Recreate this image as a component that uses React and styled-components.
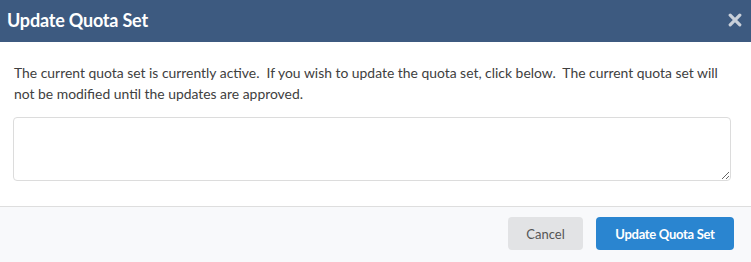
import React from "react";
import styled, { createGlobalStyle } from "styled-components";

const GlobalStyle = createGlobalStyle`
  html, body {
    margin: 0;
    padding: 0;
    background: #ffffff;
  }
  body {
    font-family: Lato, "Open Sans", sans-serif;
  }
  * {
    box-sizing: border-box;
  }
`;

const Modal = styled.div`
  width: 751px;
  height: 262px;
  display: flex;
  flex-direction: column;
  background: #ffffff;
`;

const Header = styled.div`
  height: 42px;
  background: #3d5a80;
  display: flex;
  align-items: center;
  justify-content: space-between;
  padding: 0 9px 2px 7px;
`;

const Title = styled.h1`
  margin: 0;
  font-size: 18px;
  font-weight: 700;
  color: #ffffff;
  letter-spacing: -0.2px;
`;

const CloseButton = styled.button`
  border: 0;
  background: none;
  padding: 0;
  display: flex;
  cursor: pointer;
`;

const Body = styled.div`
  flex: 1;
  padding: 20px 20px 25px 13px;
`;

const Message = styled.p`
  margin: 0 0 13px 1px;
  font-size: 13.9px;
  line-height: 21px;
  color: #404040;
  white-space: pre-wrap;
`;

const Notes = styled.textarea`
  display: block;
  width: 718px;
  height: 64px;
  border: 1px solid #dcdcdc;
  border-radius: 4px;
  font-family: inherit;
  font-size: 13px;
  padding: 6px 8px;
  outline: none;
`;

const Footer = styled.div`
  height: 56px;
  border-top: 1px solid #dedede;
  background: #f8f9fb;
  display: flex;
  align-items: center;
  justify-content: flex-end;
  gap: 13px;
  padding: 0 17px 2px;
`;

const Button = styled.button`
  height: 33px;
  width: ${(p) => (p.$primary ? "138px" : "75px")};
  padding: 0;
  border: 0;
  border-radius: 4px;
  font-family: inherit;
  font-size: 13px;
  font-weight: ${(p) => (p.$primary ? 700 : 400)};
  letter-spacing: ${(p) => (p.$primary ? "-0.3px" : "0")};
  color: ${(p) => (p.$primary ? "#ffffff" : "#555555")};
  background: ${(p) => (p.$primary ? "#2a85d0" : "#e2e3e5")};
  cursor: pointer;
`;

const CloseIcon = () => (
  <svg width="14" height="14" viewBox="0 0 14 14">
    <path
      d="M2.2 2.2 L11.8 11.8 M11.8 2.2 L2.2 11.8"
      stroke="#c9d0da"
      strokeWidth="3.2"
      strokeLinecap="round"
    />
  </svg>
);

export default function App() {
  return (
    <>
      <GlobalStyle />
      <Modal>
        <Header>
          <Title>Update Quota Set</Title>
          <CloseButton aria-label="Close">
            <CloseIcon />
          </CloseButton>
        </Header>
        <Body>
          <Message>
            {"The current quota set is currently active.  If you wish to update the quota set, click below.  The current quota set will not be modified until the updates are approved."}
          </Message>
          <Notes />
        </Body>
        <Footer>
          <Button>Cancel</Button>
          <Button $primary>Update Quota Set</Button>
        </Footer>
      </Modal>
    </>
  );
}
